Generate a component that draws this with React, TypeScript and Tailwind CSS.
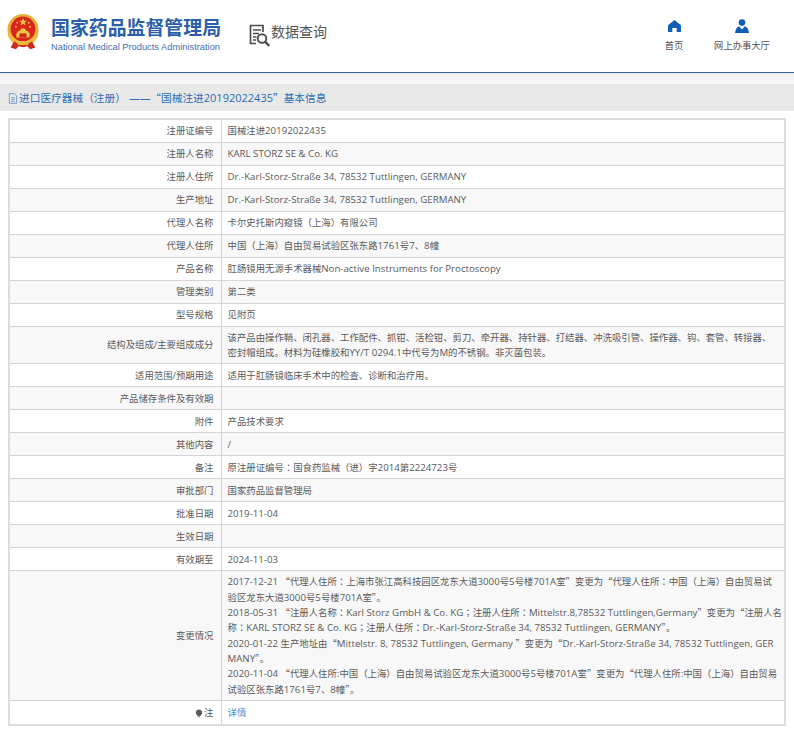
import React from 'react';

// latin runs sit a little larger than the CJK; the TC cut has colons and parens centred like the reference
function mix(text: string, latin = 'text-[9.7px]') {
  const parts = text.split(/([\x20-\x7Eß]+|[（）：；“”])/).filter(Boolean);
  return parts.map((p, i) => {
    if (p === '（' || p === '）' || p === '：' || p === '；')
      return <span key={i} className="font-['Noto_Sans_CJK_TC']">{p}</span>;
    if (p === '“' || p === '”') return <span key={i} className="font-['Noto_Sans_CJK_SC']">{p}</span>;
    if (/^[\x20-\x7Eß]+$/.test(p)) return <span key={i} className={latin}>{p}</span>;
    return <span key={i}>{p}</span>;
  });
}

const rows: { label: string; lines?: string[]; link?: string; bulb?: boolean }[] = [
  { label: '注册证编号', lines: ['国械注进20192022435'] },
  { label: '注册人名称', lines: ['KARL STORZ SE & Co. KG'] },
  { label: '注册人住所', lines: ['Dr.-Karl-Storz-Straße 34, 78532 Tuttlingen, GERMANY'] },
  { label: '生产地址', lines: ['Dr.-Karl-Storz-Straße 34, 78532 Tuttlingen, GERMANY'] },
  { label: '代理人名称', lines: ['卡尔史托斯内窥镜（上海）有限公司'] },
  { label: '代理人住所', lines: ['中国（上海）自由贸易试验区张东路1761号7、8幢'] },
  { label: '产品名称', lines: ['肛肠镜用无源手术器械Non-active Instruments for Proctoscopy'] },
  { label: '管理类别', lines: ['第二类'] },
  { label: '型号规格', lines: ['见附页'] },
  {
    label: '结构及组成/主要组成成分',
    lines: [
      '该产品由操作鞘、闭孔器、工作配件、抓钳、活检钳、剪刀、牵开器、持针器、打结器、冲洗吸引管、操作器、钩、套管、转接器、',
      '密封帽组成。材料为硅橡胶和YY/T 0294.1中代号为M的不锈钢。非灭菌包装。',
    ],
  },
  { label: '适用范围/预期用途', lines: ['适用于肛肠镜临床手术中的检查、诊断和治疗用。'] },
  { label: '产品储存条件及有效期' },
  { label: '附件', lines: ['产品技术要求'] },
  { label: '其他内容', lines: ['/'] },
  { label: '备注', lines: ['原注册证编号：国食药监械（进）字2014第2224723号'] },
  { label: '审批部门', lines: ['国家药品监督管理局'] },
  { label: '批准日期', lines: ['2019-11-04'] },
  { label: '生效日期' },
  { label: '有效期至', lines: ['2024-11-03'] },
  {
    label: '变更情况',
    lines: [
      '2017-12-21 “代理人住所：上海市张江高科技园区龙东大道3000号5号楼701A室”变更为“代理人住所：中国（上海）自由贸易试',
      '验区龙东大道3000号5号楼701A室”。',
      '2018-05-31 “注册人名称：Karl Storz GmbH & Co. KG；注册人住所：Mittelstr.8,78532 Tuttlingen,Germany”变更为“注册人名',
      '称：KARL STORZ SE & Co. KG；注册人住所：Dr.-Karl-Storz-Straße 34, 78532 Tuttlingen, GERMANY”。',
      '2020-01-22 生产地址由“Mittelstr. 8, 78532 Tuttlingen, Germany ”变更为“Dr.-Karl-Storz-Straße 34, 78532 Tuttlingen, GER',
      'MANY”。',
      '2020-11-04 “代理人住所:中国（上海）自由贸易试验区龙东大道3000号5号楼701A室”变更为“代理人住所:中国（上海）自由贸易',
      '试验区张东路1761号7、8幢”。',
    ],
  },
  { label: '注', link: '详情', bulb: true },
];

function Emblem() {
  return (
    <svg viewBox="0 0 40 44" className="w-[36px] h-[39px]">
      <circle cx="20" cy="18.500" r="17.500" fill="#e7b038" />
      <circle cx="20" cy="18" r="14" fill="#d8261c" />
      <path d="M2.500 24c2 8 8 13 17.500 13s15.500-5 17.500-13l-3.500-1.500c-2 6-7 9.500-14 9.500s-12-3.500-14-9.500z" fill="#f2bd3e" />
      <path d="M6 39l4-7 5 3 5-1.500 5 1.500 5-3 4 7-6 2-3-3.500-5 1-5-1-3 3.500z" fill="#cf2a1e" />
      <path d="M12 32h16l-2.500 4h-11z" fill="#ecb93c" />
      <polygon points="20,5.500 21.100,8.800 24.500,8.800 21.800,10.800 22.800,14 20,12.100 17.200,14 18.200,10.800 15.500,8.800 18.900,8.800" fill="#f6c93c" />
      <circle cx="13.500" cy="11" r="1" fill="#f6c93c" />
      <circle cx="26.500" cy="11" r="1" fill="#f6c93c" />
      <circle cx="12" cy="15.500" r="1" fill="#f6c93c" />
      <circle cx="28" cy="15.500" r="1" fill="#f6c93c" />
      <path d="M12.500 23l2.500-3h1.500l1.500-2.500h4l1.500 2.500H25l2.500 3v4.500h-15z" fill="#f3c544" />
      <path d="M16 23h8v4.500h-8z" fill="#c9281d" />
    </svg>
  );
}

function SearchDocIcon() {
  return (
    <svg viewBox="0 0 22 23" className="w-[22px] h-[23px]" fill="none" stroke="#4d4d4d">
      <path d="M14 8V1.500H1.500v18H7" strokeWidth="1.700" />
      <path d="M4 6h8M4 9.500h6M4 13h3.500M4 16h3" strokeWidth="1.300" />
      <circle cx="13" cy="14.500" r="4.300" strokeWidth="1.900" />
      <path d="M16.200 17.800l4 4" strokeWidth="2.400" />
    </svg>
  );
}

function HomeIcon() {
  return (
    <svg viewBox="0 0 14 13" className="w-[13px] h-[12px]" fill="#0f5fb8">
      <path d="M7 0L14 5.600V13H9.400V8.600H4.600V13H0V5.600z" />
    </svg>
  );
}

function UserIcon() {
  return (
    <svg viewBox="0 0 14 14" className="w-[14px] h-[14px]" fill="#0f5fb8">
      <circle cx="7" cy="3.600" r="3.300" />
      <path d="M4.200 7.200L7 10.400l2.800-3.200c2.200.4 3.600 2.600 4.200 6.800H0c.6-4.200 2-6.400 4.200-6.800z" />
    </svg>
  );
}

export default function App() {
  return (
    <div className="font-['Open_Sans','Noto_Sans_CJK_SC',sans-serif] w-[794px] h-[735px] overflow-hidden bg-white text-[#5a5a5a]">
      <header className="h-[73px] flex items-start border-b border-[#2a67a5]">
        <div className="ml-[5px] mt-[13px]">
          <Emblem />
        </div>
        <div className="ml-[10px] mt-[17px] font-['Liberation_Sans','Noto_Sans_CJK_SC',sans-serif]">
          <div className="text-[18.9px] leading-[23px] font-bold text-[#2b5ea8] whitespace-nowrap">
            国家药品监督管理局
          </div>
          <div className="text-[9.3px] leading-[12px] mt-[1px] text-[#3f6fb0] whitespace-nowrap">
            National Medical Products Administration
          </div>
        </div>
        <div className="ml-[28px] mt-[24px] flex items-start">
          <SearchDocIcon />
          <span className="text-[14px] leading-[16px] text-[#555] whitespace-nowrap">数据查询</span>
        </div>
        <div className="ml-auto flex mt-[20px] text-[9.3px] leading-[12px] text-[#555]">
          <div className="w-[20px] flex flex-col items-center">
            <HomeIcon />
            <span className="mt-[8px] whitespace-nowrap">首页</span>
          </div>
          <div className="w-[58px] ml-[29px] mr-[23px] flex flex-col items-center">
            <div className="-mt-px">
              <UserIcon />
            </div>
            <span className="mt-[7px] whitespace-nowrap">网上办事大厅</span>
          </div>
        </div>
      </header>
      <div className="h-[11px] bg-gradient-to-b from-[#ececec] to-[#fafafa]" />
      <div className="h-[27px] bg-[#e8e8e8] flex items-center pl-[8px] pt-px text-[10.7px] text-[#2a6db5] whitespace-nowrap">
        <svg viewBox="0 0 10 12" className="w-[10px] h-[11px] mr-px" fill="none" stroke="#5b8fc7">
          <path d="M1 .7h5.500L9 3.200v8H1zM3 5h4M3 7h4M3 9h4" strokeWidth="0.900" />
        </svg>
        <span>{mix('进口医疗器械（注册）', 'text-[11px]')}</span>
        <span className="ml-[3px]">——</span>
        <span>{mix('“国械注进20192022435”基本信息', 'text-[11px]')}</span>
      </div>
      <div className="px-[8px] pt-[7px]">
        <table className="w-full border-collapse border-2 border-[#ddd] text-[9.4px] leading-[15.35px] table-fixed">
          <colgroup>
            <col className="w-[212px]" />
            <col />
          </colgroup>
          <tbody>
            {rows.map((row, i) => (
              <tr key={i} className={i % 2 === 1 ? 'bg-[#f8f8f8]' : 'bg-white'}>
                <td className={`border border-[#d4d4d4] text-right pr-[7px] py-[3px] ${row.bulb ? 'h-[25px]' : 'h-[23px]'}`}>
                  {row.bulb && (
                    <svg viewBox="0 0 10 12" className="inline w-[8px] h-[9px] mr-px" fill="#5a5a5a">
                      <path d="M5 0.500a4.300 4.300 0 0 0-2.600 7.700c.6.5.8 1 .9 1.500h3.400c.1-.5.3-1 .9-1.500A4.300 4.300 0 0 0 5 .5zM3.600 10.400h2.800L5 11.800z" />
                    </svg>
                  )}
                  {row.label}
                </td>
                <td className="border border-[#d4d4d4] pl-[6px] pr-0 h-[23px] py-[3px] whitespace-nowrap">
                  {row.lines?.map((line, j) => <div key={j}>{mix(line)}</div>)}
                  {row.link && <span className="text-[#3c8ddc]">{row.link}</span>}
                </td>
              </tr>
            ))}
          </tbody>
        </table>
      </div>
    </div>
  );
}
